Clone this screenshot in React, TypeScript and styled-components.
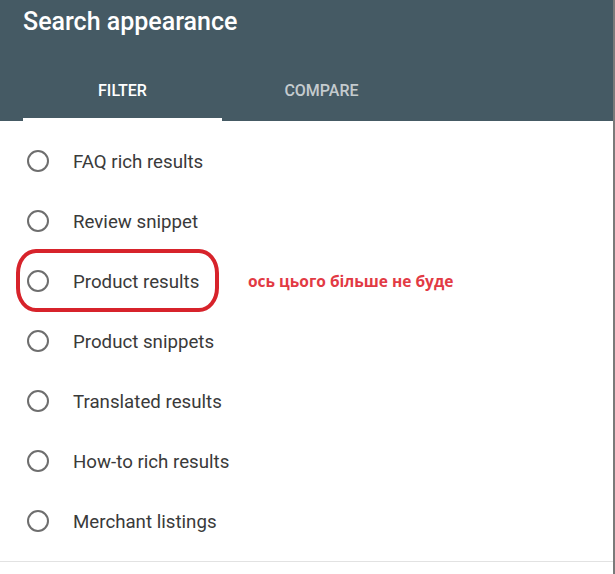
import React from "react";
import styled, { createGlobalStyle } from "styled-components";

const Global = createGlobalStyle`
  html, body { margin: 0; padding: 0; background: #ffffff; }
  body { font-family: Roboto, "Noto Sans", Arial, sans-serif; }
`;

const Panel = styled.div`
  width: 613px;
  height: 574px;
  border-right: 2px solid #7a7a7a;
  background: #fff;
  display: flex;
  flex-direction: column;
`;

const Header = styled.header`
  background: #455a64;
  height: 121px;
  box-sizing: border-box;
  padding: 0 0 0 23px;
  display: flex;
  flex-direction: column;
`;

const Title = styled.h1`
  margin: 0;
  padding-top: 6px;
  font-family: Roboto, sans-serif;
  font-weight: 500;
  font-size: 25px;
  line-height: 32px;
  color: #ffffff;
`;

const Tabs = styled.nav`
  margin-top: auto;
  display: flex;
`;

const Tab = styled.div<{ $active?: boolean }>`
  width: 199px;
  height: 52px;
  box-sizing: border-box;
  display: flex;
  align-items: center;
  justify-content: center;
  padding-bottom: 7px;
  font-family: Roboto, sans-serif;
  font-weight: 500;
  font-size: 16px;
  color: ${(p) => (p.$active ? "#ffffff" : "rgba(255,255,255,0.7)")};
  border-bottom: 3px solid ${(p) => (p.$active ? "#ffffff" : "transparent")};
`;

const List = styled.ul`
  list-style: none;
  margin: 0;
  padding: 10px 0;
  border-bottom: 1px solid #e2e2e2;
  position: relative;
`;

const Row = styled.li`
  height: 60px;
  display: flex;
  align-items: center;
  padding-left: 27px;
  position: relative;
`;

const Radio = styled.span`
  width: 22px;
  height: 22px;
  box-sizing: border-box;
  border: 2px solid #6e6e6e;
  border-radius: 50%;
  flex: none;
`;

const Label = styled.span`
  margin-left: 24px;
  padding-top: 2px;
  font-family: Roboto, sans-serif;
  font-size: 18.7px;
  color: #3a3a3a;
`;

const Highlight = styled.span`
  position: absolute;
  left: 16px;
  top: -2px;
  width: 203px;
  height: 63px;
  box-sizing: border-box;
  border: 4px solid #d7232b;
  border-radius: 20px / 24px;
  pointer-events: none;
`;

const Note = styled.span`
  position: absolute;
  left: 248px;
  top: 50%;
  transform: translateY(-52%);
  font-family: "Open Sans", "Noto Sans", sans-serif;
  font-weight: 700;
  font-size: 15.5px;
  color: #e23a44;
  white-space: nowrap;
`;

const items = [
  "FAQ rich results",
  "Review snippet",
  "Product results",
  "Product snippets",
  "Translated results",
  "How-to rich results",
  "Merchant listings",
];

export default function App() {
  return (
    <>
      <Global />
      <Panel>
        <Header>
          <Title>Search appearance</Title>
          <Tabs>
            <Tab $active>FILTER</Tab>
            <Tab>COMPARE</Tab>
          </Tabs>
        </Header>
        <List>
          {items.map((t) => (
            <Row key={t}>
              <Radio />
              <Label>{t}</Label>
              {t === "Product results" && (
                <>
                  <Highlight />
                  <Note>ось цього більше не буде</Note>
                </>
              )}
            </Row>
          ))}
        </List>
      </Panel>
    </>
  );
}
